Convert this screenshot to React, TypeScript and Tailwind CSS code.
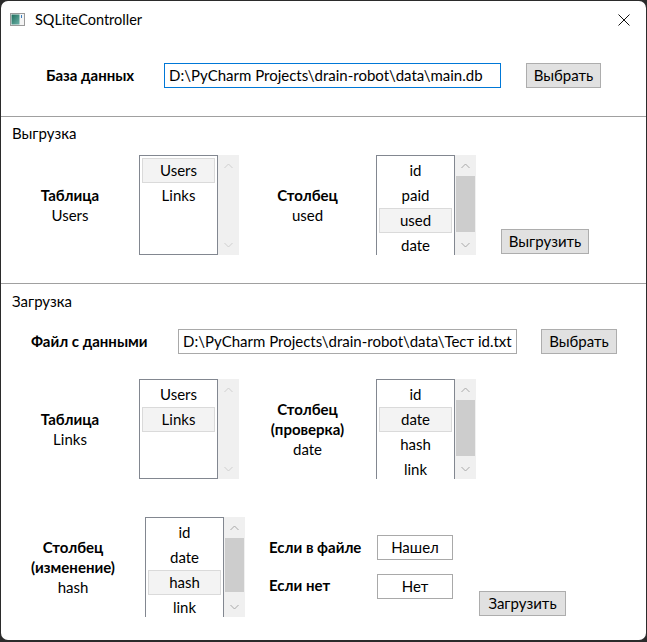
import React from "react"

function Chevron({ up, color }: { up: boolean; color: string }) {
    return (
        <svg width="9" height="6" viewBox="0 0 9 6">
            {up ? (
                <polyline points="0.5,5 4.5,1 8.5,5" fill="none" stroke={color} strokeWidth="1" />
            ) : (
                <polyline points="0.5,1 4.5,5 8.5,1" fill="none" stroke={color} strokeWidth="1" />
            )}
        </svg>
    )
}

function ListBox({
    items,
    selected,
    scroll,
    thumbHeight,
}: {
    items: string[]
    selected: number
    scroll: boolean
    thumbHeight?: number
}) {
    return (
        <div className="flex h-[100px]">
            <div
                className={
                    scroll
                        ? "w-[79px] h-[100px] border-t border-l border-r border-[#828790] overflow-hidden px-[2px] pt-[2px]"
                        : "w-[79px] h-[100px] border border-[#828790] overflow-hidden px-[2px] pt-[2px]"
                }
            >
                {items.map((it, i) => (
                    <div
                        key={it}
                        className={
                            i === selected
                                ? "h-[25px] flex items-center justify-center bg-[#f3f3f3] border border-[#dadada]"
                                : "h-[25px] flex items-center justify-center border border-transparent"
                        }
                    >
                        {it}
                    </div>
                ))}
            </div>
            <div className="w-[21px] h-[100px] bg-[#f0f0f0] flex flex-col">
                <div className="h-[21px] flex items-center justify-center">
                    <Chevron up={true} color={scroll ? "#a8a8a8" : "#cfcfcf"} />
                </div>
                <div className="flex-1 px-[1px]">
                    {scroll && <div className="w-full bg-[#cdcdcd]" style={{ height: thumbHeight }} />}
                </div>
                <div className="h-[21px] flex items-center justify-center">
                    <Chevron up={false} color={scroll ? "#a8a8a8" : "#cfcfcf"} />
                </div>
            </div>
        </div>
    )
}

function Button({ label, width }: { label: string; width: string }) {
    return (
        <div className={"h-[25px] bg-[#e1e1e1] border border-[#adadad] flex items-center justify-center " + width}>
            {label}
        </div>
    )
}

export default function App() {
    return (
        <div
            className="w-[647px] h-[642px] bg-[#2b2b2b] p-px pb-[2px] text-[15px] text-black"
            style={{ fontFamily: '"Segoe UI", Lato, "Noto Sans", sans-serif' }}
        >
            <div className="h-full bg-white rounded-[7px] flex flex-col overflow-hidden">
                {/* title bar */}
                <div className="h-[37px] flex items-center pl-[9px] pr-[16px] shrink-0">
                    <svg width="15" height="13" viewBox="0 0 15 13">
                        <defs>
                            <linearGradient id="g" x1="0" y1="0" x2="1" y2="1">
                                <stop offset="0" stopColor="#1f6d5c" />
                                <stop offset="1" stopColor="#6cb2a8" />
                            </linearGradient>
                        </defs>
                        <rect x="0.5" y="0.5" width="14" height="12" fill="#f4f4f4" stroke="#9a9a9a" />
                        <rect x="1.5" y="1.5" width="8" height="10" fill="url(#g)" />
                        <rect x="11" y="2" width="1" height="3" fill="#3c7fc0" />
                    </svg>
                    <span className="ml-[10px] text-[14.5px]">SQLiteController</span>
                    <div className="flex-1" />
                    <svg width="12" height="12" viewBox="0 0 12 12">
                        <line x1="0.5" y1="0.5" x2="11.5" y2="11.5" stroke="#111" strokeWidth="1" />
                        <line x1="11.5" y1="0.5" x2="0.5" y2="11.5" stroke="#111" strokeWidth="1" />
                    </svg>
                </div>

                {/* database */}
                <div className="h-[78px] shrink-0 pt-[25px] pl-[45px]">
                    <div className="flex items-center h-[25px]">
                        <div className="w-[118px] font-bold">База данных</div>
                        <div className="w-[337px] h-[25px] border border-[#0078d7] flex items-center px-[4px] whitespace-nowrap overflow-hidden">
                            D:\PyCharm Projects\drain-robot\data\main.db
                        </div>
                        <div className="ml-[25px]">
                            <Button label="Выбрать" width="w-[75px]" />
                        </div>
                    </div>
                </div>

                <div className="h-px bg-[#a0a0a0] shrink-0" />

                {/* export */}
                <div className="h-[166px] shrink-0 pt-[6px]">
                    <div className="h-[20px] leading-[20px] pl-[11px]">Выгрузка</div>
                    <div className="mt-[12px] flex">
                        <div className="w-[138px] flex flex-col items-center justify-center leading-[20px]">
                            <div className="font-bold">Таблица</div>
                            <div>Users</div>
                        </div>
                        <ListBox items={["Users", "Links"]} selected={0} scroll={false} />
                        <div className="w-[137px] flex flex-col items-center justify-center leading-[20px]">
                            <div className="font-bold">Столбец</div>
                            <div>used</div>
                        </div>
                        <ListBox items={["id", "paid", "used", "date"]} selected={2} scroll={true} thumbHeight={56} />
                        <div className="ml-[25px] self-end mb-px">
                            <Button label="Выгрузить" width="w-[88px]" />
                        </div>
                    </div>
                </div>

                <div className="h-px bg-[#a0a0a0] shrink-0" />

                {/* import */}
                <div className="flex-1 pt-[7px]">
                    <div className="h-[20px] leading-[20px] pl-[11px]">Загрузка</div>
                    <div className="mt-[18px] flex items-center h-[25px] pl-[30px]">
                        <div className="w-[147px] font-bold">Файл с данными</div>
                        <div className="w-[339px] h-[25px] border border-[#a9a9a9] flex items-center px-[4px] whitespace-nowrap overflow-hidden">
                            D:\PyCharm Projects\drain-robot\data\Тест id.txt
                        </div>
                        <div className="ml-[24px]">
                            <Button label="Выбрать" width="w-[76px]" />
                        </div>
                    </div>

                    <div className="mt-[25px] flex">
                        <div className="w-[138px] flex flex-col items-center justify-center leading-[20px]">
                            <div className="font-bold">Таблица</div>
                            <div>Links</div>
                        </div>
                        <ListBox items={["Users", "Links"]} selected={1} scroll={false} />
                        <div className="w-[137px] flex flex-col items-center justify-center leading-[20px]">
                            <div className="font-bold">Столбец</div>
                            <div className="font-bold">(проверка)</div>
                            <div>date</div>
                        </div>
                        <ListBox items={["id", "date", "hash", "link"]} selected={1} scroll={true} thumbHeight={56} />
                    </div>

                    <div className="mt-[38px] flex">
                        <div className="w-[144px] flex flex-col items-center justify-center leading-[20px]">
                            <div className="font-bold">Столбец</div>
                            <div className="font-bold">(изменение)</div>
                            <div>hash</div>
                        </div>
                        <ListBox items={["id", "date", "hash", "link"]} selected={2} scroll={true} thumbHeight={54} />
                        <div className="ml-[24px] pt-[18px] flex flex-col gap-[14px]">
                            <div className="flex items-center h-[25px]">
                                <div className="w-[108px] font-bold">Если в файле</div>
                                <div className="w-[76px] h-[25px] border border-[#a9a9a9] flex items-center justify-center">Нашел</div>
                            </div>
                            <div className="flex items-center h-[25px]">
                                <div className="w-[108px] font-bold -mt-[3px]">Если нет</div>
                                <div className="w-[76px] h-[25px] border border-[#a9a9a9] flex items-center justify-center">Нет</div>
                            </div>
                        </div>
                        <div className="ml-[26px] self-end mb-px">
                            <Button label="Загрузить" width="w-[87px]" />
                        </div>
                    </div>
                </div>
            </div>
        </div>
    )
}
